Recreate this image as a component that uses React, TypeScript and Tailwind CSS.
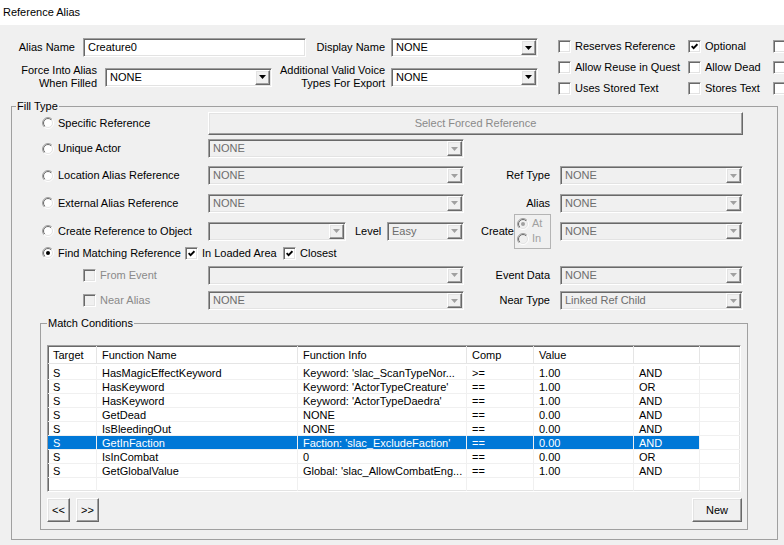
import { useId } from 'react';
import clsx from 'clsx';

const SUNKEN =
  'border border-t-[#a0a0a0] border-l-[#a0a0a0] border-r-white border-b-white shadow-[inset_1px_1px_0_#696969,inset_-1px_-1px_0_#e3e3e3]';
const RAISED =
  'border border-t-white border-l-white border-r-[#696969] border-b-[#696969] shadow-[inset_-1px_-1px_0_#a0a0a0,inset_1px_1px_0_#e3e3e3]';

function Combo({ value = '', className, disabled }: { value?: string; className: string; disabled?: boolean }) {
  return (
    <div
      className={clsx(
        'flex h-[19px] shrink-0 items-center',
        SUNKEN,
        disabled ? 'bg-[#f0f0f0] text-[#6d6d6d]' : 'bg-white',
        className
      )}
    >
      <span className="flex-1 overflow-hidden whitespace-nowrap pl-[4px]">{value}</span>
      <span className={clsx('mr-px flex h-[15px] w-[15px] items-center justify-center bg-[#f0f0f0]', RAISED)}>
        <svg width="7" height="4" viewBox="0 0 7 4">
          <path d="M0 0h7L3.5 4z" fill={disabled ? '#a0a0a0' : '#000'} />
        </svg>
      </span>
    </div>
  );
}

function Check({ checked, disabled }: { checked?: boolean; disabled?: boolean }) {
  return (
    <span
      className={clsx(
        'flex h-[13px] w-[13px] shrink-0 items-center justify-center',
        SUNKEN,
        disabled ? 'bg-[#f0f0f0]' : 'bg-white'
      )}
    >
      {checked && (
        <svg width="7" height="7" viewBox="0 0 7 7">
          <path d="M0.6 3.2 L2.6 5.2 L6.4 1.2" fill="none" stroke="#000" strokeWidth="1.8" />
        </svg>
      )}
    </span>
  );
}

function Radio({ checked, disabled }: { checked?: boolean; disabled?: boolean }) {
  const id = useId().replace(/[^a-zA-Z0-9]/g, '');
  return (
    <svg width="12" height="12" viewBox="0 0 12 12" className="shrink-0">
      <defs>
        <linearGradient id={id + 'o'} x1="0" y1="0" x2="1" y2="1">
          <stop offset="0.5" stopColor="#a0a0a0" />
          <stop offset="0.5" stopColor="#ffffff" />
        </linearGradient>
        <linearGradient id={id + 'i'} x1="0" y1="0" x2="1" y2="1">
          <stop offset="0.5" stopColor="#696969" />
          <stop offset="0.5" stopColor="#e3e3e3" />
        </linearGradient>
      </defs>
      <circle cx="6" cy="6" r="5.5" fill="none" stroke={`url(#${id}o)`} />
      <circle cx="6" cy="6" r="4.5" fill={disabled ? '#f0f0f0' : '#fff'} stroke={`url(#${id}i)`} />
      {checked && <circle cx="6" cy="6" r="2" fill={disabled ? '#a0a0a0' : '#000'} />}
    </svg>
  );
}

function RadioCell({ text, checked, className = 'w-[168px]' }: { text: string; checked?: boolean; className?: string }) {
  return (
    <div className={clsx('flex shrink-0 items-center gap-[4px] whitespace-nowrap pl-[2px]', className)}>
      <Radio checked={checked} />
      <span>{text}</span>
    </div>
  );
}

function SideLabel({ text }: { text: string }) {
  return <span className="w-[87px] shrink-0 whitespace-nowrap pr-[1px] text-right">{text}</span>;
}

// third column is cut off by the window edge, only the boxes show
const FLAGS: [string, boolean][] = [
  ['Reserves Reference', false],
  ['Optional', true],
  ['', false],
  ['Allow Reuse in Quest', false],
  ['Allow Dead', false],
  ['', false],
  ['Uses Stored Text', false],
  ['Stores Text', false],
  ['', false],
];

const COLS = ['w-[49px]', 'w-[201px]', 'w-[169px]', 'w-[67px]', 'w-[100px]', 'w-[66px]'];
const HEAD = ['Target', 'Function Name', 'Function Info', 'Comp', 'Value', ''];
const ROWS = [
  ['S', 'HasMagicEffectKeyword', "Keyword: 'slac_ScanTypeNor...", '>=', '1.00', 'AND'],
  ['S', 'HasKeyword', "Keyword: 'ActorTypeCreature'", '==', '1.00', 'OR'],
  ['S', 'HasKeyword', "Keyword: 'ActorTypeDaedra'", '==', '1.00', 'AND'],
  ['S', 'GetDead', 'NONE', '==', '0.00', 'AND'],
  ['S', 'IsBleedingOut', 'NONE', '==', '0.00', 'AND'],
  ['S', 'GetInFaction', "Faction: 'slac_ExcludeFaction'", '==', '0.00', 'AND'],
  ['S', 'IsInCombat', '0', '==', '0.00', 'OR'],
  ['S', 'GetGlobalValue', "Global: 'slac_AllowCombatEng...", '==', '1.00', 'AND'],
  ['', '', '', '', '', ''],
];
const SELECTED = 5;

export default function App() {
  return (
    <div className="h-[545px] w-[784px] overflow-hidden bg-[#f0f0f0] font-['Liberation_Sans',Arial,sans-serif] text-[11px] leading-[13px] text-black">
      <div className="flex h-[25px] items-center bg-white pl-[3px]">Reference Alias</div>

      {/* names + flags */}
      <div className="flex h-[76px]">
        <div className="w-[538px] shrink-0 pt-[13px]">
          <div className="flex h-[19px] items-center">
            <span className="w-[75px] shrink-0 text-right">Alias Name</span>
            <div className={clsx('ml-[8px] flex h-[19px] w-[223px] shrink-0 items-center bg-white pl-[4px]', SUNKEN)}>
              Creature0
            </div>
            <span className="w-[79px] shrink-0 text-right">Display Name</span>
            <Combo className="ml-[6px] w-[147px]" value="NONE" />
          </div>
          <div className="mt-[7px] flex h-[26px] items-center">
            <span className="w-[97px] shrink-0 text-right">
              Force Into Alias
              <br />
              When Filled
            </span>
            <Combo className="ml-[8px] w-[167px]" value="NONE" />
            <span className="w-[113px] shrink-0 whitespace-nowrap text-right">
              Additional Valid Voice
              <br />
              Types For Export
            </span>
            <Combo className="ml-[6px] w-[147px]" value="NONE" />
          </div>
        </div>
        <div className="ml-[20px] grid shrink-0 auto-rows-[21px] grid-cols-[130px_85px_11px] pt-[11px]">
          {FLAGS.map(([t, c], i) => (
            <div key={i} className="flex items-center gap-[4px] whitespace-nowrap">
              <Check checked={c} />
              {t && <span>{t}</span>}
            </div>
          ))}
        </div>
      </div>

      {/* Fill Type */}
      <fieldset className="ml-[11px] w-[767px] border border-[#a0a0a0]">
        <legend className="ml-[4px] px-[1px] leading-[10px]">Fill Type</legend>
        <div className="px-[28px] pb-[9px]">
          <div className="flex h-[24px] items-center">
            <RadioCell text="Specific Reference" />
            <div className={clsx('flex h-[23px] w-[535px] items-center justify-center text-[#8a8a8a]', RAISED)}>
              Select Forced Reference
            </div>
          </div>
          <div className="flex h-[27px] items-center">
            <RadioCell text="Unique Actor" />
            <Combo className="w-[256px]" value="NONE" disabled />
          </div>
          <div className="flex h-[27px] items-center">
            <RadioCell text="Location Alias Reference" />
            <Combo className="w-[256px]" value="NONE" disabled />
            <SideLabel text="Ref Type" />
            <Combo className="ml-[9px] w-[183px]" value="NONE" disabled />
          </div>
          <div className="flex h-[28px] items-center">
            <RadioCell text="External Alias Reference" />
            <Combo className="w-[256px]" value="NONE" disabled />
            <SideLabel text="Alias" />
            <Combo className="ml-[9px] w-[183px]" value="NONE" disabled />
          </div>
          <div className="flex h-[28px] items-center">
            <RadioCell text="Create Reference to Object" />
            <Combo className="w-[138px]" disabled />
            <span className="w-[41px] shrink-0 pl-[9px]">Level</span>
            <Combo className="w-[77px]" value="Easy" disabled />
            <span className="w-[50px] shrink-0 text-right">Create</span>
            <div className="flex h-[35px] w-[37px] shrink-0 flex-col justify-center gap-[2px] border border-[#b4b4b4] pl-[2px] text-[#a0a0a0]">
              <div className="flex h-[13px] items-center gap-[3px]">
                <Radio checked disabled />
                <span>At</span>
              </div>
              <div className="flex h-[13px] items-center gap-[3px]">
                <Radio disabled />
                <span>In</span>
              </div>
            </div>
            <Combo className="ml-[9px] w-[183px]" value="NONE" disabled />
          </div>
          <div className="flex h-[16px] items-center">
            <RadioCell text="Find Matching Reference" checked className="w-[145px]" />
            <Check checked />
            <span className="w-[85px] shrink-0 pl-[4px]">In Loaded Area</span>
            <Check checked />
            <span className="pl-[4px]">Closest</span>
          </div>
          <div className="flex h-[28px] items-center">
            <div className="flex w-[168px] shrink-0 items-center gap-[4px] pl-[43px] text-[#8a8a8a]">
              <Check disabled />
              <span>From Event</span>
            </div>
            <Combo className="w-[256px]" disabled />
            <SideLabel text="Event Data" />
            <Combo className="ml-[9px] w-[183px]" value="NONE" disabled />
          </div>
          <div className="flex h-[23px] items-center">
            <div className="flex w-[168px] shrink-0 items-center gap-[4px] pl-[43px] text-[#8a8a8a]">
              <Check disabled />
              <span>Near Alias</span>
            </div>
            <Combo className="w-[256px]" value="NONE" disabled />
            <SideLabel text="Near Type" />
            <Combo className="ml-[9px] w-[183px]" value="Linked Ref Child" disabled />
          </div>

          {/* Match Conditions */}
          <fieldset className="mt-[6px] w-[708px] border border-[#a0a0a0]">
            <legend className="ml-[6px] px-[1px] leading-[10px]">Match Conditions</legend>
            <div className="pb-[7px] pl-[6px] pr-[5px] pt-[17px]">
              <div className={clsx('h-[147px] w-[694px] overflow-hidden bg-white', SUNKEN)}>
                <div className="flex h-[18px] border-b border-[#e5e5e5]">
                  {HEAD.map((h, i) => (
                    <div key={i} className={clsx('flex items-center border-r border-[#e5e5e5] pl-[5px] pt-[1px]', COLS[i])}>
                      {h}
                    </div>
                  ))}
                </div>
                <div className="pt-[2px]">
                  {ROWS.map((r, ri) => (
                    <div key={ri} className="flex h-[14px] border-b border-[#f0f0f0]">
                      {r.map((c, ci) => (
                        <div
                          key={ci}
                          className={clsx(
                            'overflow-hidden whitespace-nowrap border-r border-[#f0f0f0] pl-[5px] leading-[14px]',
                            COLS[ci],
                            ri === SELECTED && 'bg-[#0078d7] text-white'
                          )}
                        >
                          {c}
                        </div>
                      ))}
                    </div>
                  ))}
                </div>
              </div>
              <div className="mt-[6px] flex h-[24px]">
                <div className={clsx('flex w-[23px] items-center justify-center', RAISED)}>&lt;&lt;</div>
                <div className={clsx('ml-[6px] flex w-[23px] items-center justify-center', RAISED)}>&gt;&gt;</div>
                <div className={clsx('ml-auto flex w-[50px] items-center justify-center', RAISED)}>New</div>
              </div>
            </div>
          </fieldset>
        </div>
      </fieldset>
    </div>
  );
}
